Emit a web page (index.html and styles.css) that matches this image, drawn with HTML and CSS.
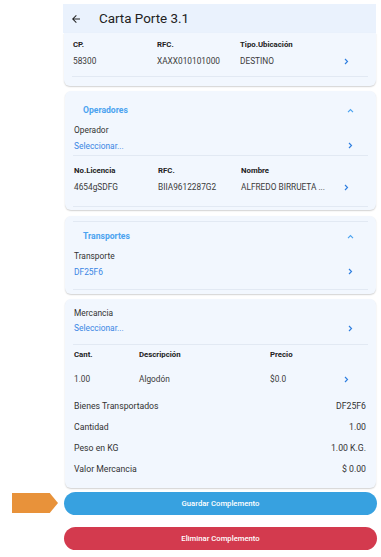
FILE: index.html
```html
<!DOCTYPE html>
<html lang="es">
<head>
<meta charset="utf-8">
<title>Carta Porte 3.1</title>
<link rel="stylesheet" href="styles.css">
</head>
<body>
<div class="page">
  <div class="marker"></div>
  <div class="screen">
    <header class="appbar">
      <svg class="back" viewBox="0 0 24 24" width="12" height="12"><path d="M20 11H7.83l5.59-5.59L12 4l-8 8 8 8 1.41-1.41L7.83 13H20v-2z" fill="#222"/></svg>
      <span class="title">Carta Porte 3.1</span>
    </header>

    <section class="card card-first">
      <div class="grid3">
        <span class="th">CP.</span><span class="th">RFC.</span><span class="th">Tipo.Ubicación</span><span></span>
        <span class="td">58300</span><span class="td">XAXX010101000</span><span class="td">DESTINO</span><span class="chev"><svg viewBox="0 0 6 8" width="5" height="7"><path d="M1.2 1l3 3-3 3" fill="none" stroke="#2f7fe0" stroke-width="1.4"/></svg></span>
      </div>
      <div class="rule rule-first"></div>
    </section>

    <section class="card card-op">
      <div class="sec-head">
        <span class="sec-title">Operadores</span>
        <svg class="up" viewBox="0 0 8 6" width="7" height="5"><path d="M1 5l3-3 3 3" fill="none" stroke="#4ba3f0" stroke-width="1.4"/></svg>
      </div>
      <div class="field-label">Operador</div>
      <div class="select-row"><span class="link">Seleccionar...</span><span class="chev2"><svg viewBox="0 0 6 8" width="5" height="7"><path d="M1.2 1l3 3-3 3" fill="none" stroke="#2f7fe0" stroke-width="1.4"/></svg></span></div>
      <div class="rule rule-op1"></div>
      <div class="grid3 grid-op">
        <span class="th">No.Licencia</span><span class="th">RFC.</span><span class="th">Nombre</span><span></span>
        <span class="td">4654gSDFG</span><span class="td">BIIA9612287G2</span><span class="td">ALFREDO BIRRUETA ...</span><span class="chev"><svg viewBox="0 0 6 8" width="5" height="7"><path d="M1.2 1l3 3-3 3" fill="none" stroke="#2f7fe0" stroke-width="1.4"/></svg></span>
      </div>
      <div class="rule rule-op2"></div>
    </section>

    <section class="card card-tr">
      <div class="rule rule-tr1"></div>
      <div class="sec-head">
        <span class="sec-title">Transportes</span>
        <svg class="up" viewBox="0 0 8 6" width="7" height="5"><path d="M1 5l3-3 3 3" fill="none" stroke="#4ba3f0" stroke-width="1.4"/></svg>
      </div>
      <div class="field-label">Transporte</div>
      <div class="select-row"><span class="link">DF25F6</span><span class="chev2"><svg viewBox="0 0 6 8" width="5" height="7"><path d="M1.2 1l3 3-3 3" fill="none" stroke="#2f7fe0" stroke-width="1.4"/></svg></span></div>
      <div class="rule rule-tr2"></div>
    </section>

    <section class="card card-me">
      <div class="field-label field-first">Mercancia</div>
      <div class="select-row"><span class="link">Seleccionar...</span><span class="chev2"><svg viewBox="0 0 6 8" width="5" height="7"><path d="M1.2 1l3 3-3 3" fill="none" stroke="#2f7fe0" stroke-width="1.4"/></svg></span></div>
      <div class="rule rule-me"></div>
      <div class="grid-me">
        <span class="th">Cant.</span><span class="th">Descripción</span><span class="th">Precio</span><span></span>
        <span class="td">1.00</span><span class="td">Algodón</span><span class="td">$0.0</span><span class="chev"><svg viewBox="0 0 6 8" width="5" height="7"><path d="M1.2 1l3 3-3 3" fill="none" stroke="#2f7fe0" stroke-width="1.4"/></svg></span>
      </div>
      <div class="summary">
        <div class="sum-row"><span>Bienes Transportados</span><span>DF25F6</span></div>
        <div class="sum-row"><span>Cantidad</span><span>1.00</span></div>
        <div class="sum-row"><span>Peso en KG</span><span>1.00 K.G.</span></div>
        <div class="sum-row"><span>Valor Mercancia</span><span>$ 0.00</span></div>
      </div>
    </section>

    <button class="btn btn-save">Guardar Complemento</button>
    <button class="btn btn-del">Eliminar Complemento</button>
  </div>
</div>
</body>
</html>
```
FILE: styles.css
```css
* { box-sizing: border-box; }
html, body { margin: 0; padding: 0; background: #fff; }
body { font-family: Roboto, "Noto Sans", sans-serif; color: #222; width: 381px; height: 557px; overflow: hidden; }

.page { display: flex; padding-top: 4px; }
.marker {
  position: absolute; left: 12px; top: 493px; width: 46px; height: 20px;
  background: #e8923a;
  clip-path: polygon(0 0, 82% 0, 100% 50%, 82% 100%, 0 100%);
}
.screen { margin-left: 63px; width: 313px; display: flex; flex-direction: column; }

.appbar {
  height: 29px; background: #eaf2fd; display: flex; align-items: center;
  padding-left: 7px;
}
.back { margin-right: 17px; }
.title { font-size: 13.4px; color: #222; }

.card {
  background: #f2f7fe; border-radius: 6px; margin-left: 2px;
  box-shadow: 0 1px 1.5px rgba(0,0,0,0.18);
  padding: 0 9px;
}
.card-first { border-radius: 0 0 6px 6px; margin-left: 1px; padding-top: 6px; height: 53px; }
.card-op { margin-top: 5px; padding-top: 12px; height: 119px; }
.card-tr { margin-top: 6px; padding-top: 5px; height: 78px; }
.card-me { margin-top: 5px; padding-top: 8.5px; height: 189px; }

.grid3 { display: grid; grid-template-columns: 84px 83px 1fr 23px; row-gap: 6px; line-height: 11px; }
.grid-me { display: grid; grid-template-columns: 65px 131px 1fr 23px; row-gap: 14px; line-height: 11px; padding-top: 3.5px; }
.th { font-weight: 700; font-size: 7.8px; color: #222; }
.td { color: #3a3a3a; font-size: 8.3px; }
.chev, .chev2 { display: flex; align-items: center; }

.rule { height: 1px; background: #e2e9f3; margin: 0 -1px; }
.rule-first { margin-top: 9px; }
.rule-op1 { margin-bottom: 4px; }
.rule-op2 { margin-top: 13px; }
.rule-tr1 { margin-bottom: 7px; }
.rule-tr2 { margin-top: 8px; }
.rule-me { margin-bottom: 0; }

.sec-head { display: flex; justify-content: space-between; align-items: center; padding-left: 9px; padding-right: 13px; height: 14px; }
.sec-title { color: #4ba3f0; font-weight: 700; font-size: 8.6px; }

.field-label { font-size: 8.4px; margin-top: 8px; line-height: 11px; color: #333; }
.field-first { margin-top: 0; }
.select-row { display: flex; justify-content: space-between; align-items: center; height: 19px; padding-right: 14px; }
.card-me .select-row { margin-bottom: 6.5px; }
.link { color: #3a86e4; font-size: 8.4px; }

.grid-op { padding-top: 5px; }

.summary { margin-top: 15.5px; display: flex; flex-direction: column; gap: 9px; }
.sum-row { display: flex; justify-content: space-between; font-size: 8.7px; line-height: 12px; color: #333; padding-right: 1px; }

.btn {
  border: 0; border-radius: 12px; height: 23px; color: #fff; font-family: Roboto, sans-serif;
  font-size: 7.7px; font-weight: 500; margin-left: 1px; width: 313px; padding: 0;
}
.btn-save { background: #37a1e0; margin-top: 4px; }
.btn-del { background: #d33a4e; margin-top: 12px; }
```
